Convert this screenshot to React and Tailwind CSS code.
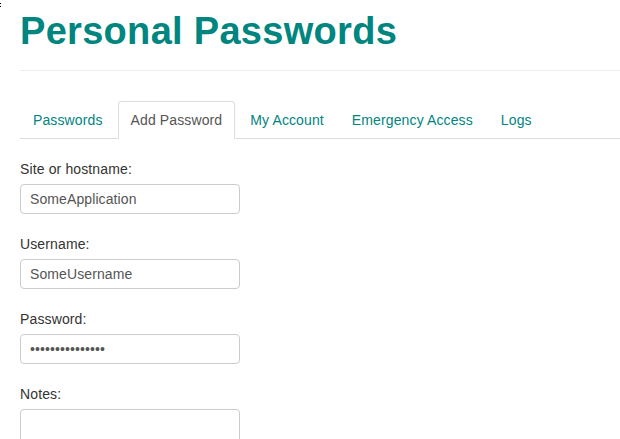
import React from "react";

const font = { fontFamily: '"Liberation Sans", Arial, sans-serif' };

function Field({ label, value, type = "text", tall = false }) {
  return (
    <div className="mb-[20px]">
      <div className="text-[14px] leading-[20px] tracking-[0.13px] text-[#333] mb-[5px]">{label}</div>
      <input
        type={type}
        readOnly
        value={value}
        className={`block w-[220px] ${tall ? "h-[60px]" : "h-[30px]"} border border-[#ccc] rounded-[4px] pl-[9px] text-[14px] tracking-[0.1px] text-[#555] bg-white outline-none`}
        style={font}
      />
    </div>
  );
}

export default function App() {
  const tabs = ["Passwords", "Add Password", "My Account", "Emergency Access", "Logs"];
  return (
    <div className="relative w-[620px] h-[439px] overflow-hidden bg-white" style={font}>
      <div className="absolute left-0 top-[3px] w-[1px] h-[1px] bg-black" />
      <div className="absolute left-0 top-[6px] w-[1px] h-[1px] bg-black" />
      <div className="pl-[20px]">
        <h1 className="pt-[10px] text-[38px] leading-[42px] tracking-[0.3px] font-bold text-[#00857f] m-0">
          Personal Passwords
        </h1>
        <div className="mt-[18px] h-px bg-[#eee]" />
        <div className="mt-[30px] flex border-b border-[#ddd]">
          {tabs.map((t) => {
            const active = t === "Add Password";
            return (
              <div
                key={t}
                className={
                  active
                    ? "mr-[2px] mb-[-1px] px-[12px] py-[8px] text-[14px] leading-[20px] tracking-[0.12px] text-[#555] bg-white border border-[#ddd] border-b-transparent rounded-t-[4px]"
                    : "mr-[2px] mb-[-1px] px-[12px] py-[8px] text-[14px] leading-[20px] tracking-[0.12px] text-[#00857f] border border-transparent rounded-t-[4px]"
                }
              >
                {t}
              </div>
            );
          })}
        </div>
        <div className="pt-[20px]">
          <Field label="Site or hostname:" value="SomeApplication" />
          <Field label="Username:" value="SomeUsername" />
          <Field label="Password:" value="abcdefghijklmno" type="password" />
          <Field label="Notes:" value="" tall />
        </div>
      </div>
    </div>
  );
}
